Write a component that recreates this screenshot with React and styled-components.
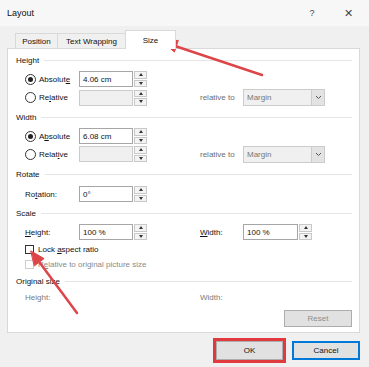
import React from 'react'
import styled, { createGlobalStyle } from 'styled-components'

const GlobalStyle = createGlobalStyle`
  * { box-sizing: border-box; }
  body {
    margin: 0;
    background: #f0f0f0;
    font-family: "Liberation Sans", Arial, sans-serif;
  }
`

const Dialog = styled.div`
  position: relative;
  width: 369px;
  height: 367px;
  background: #f0f0f0;
  display: flex;
  flex-direction: column;
  font-size: 8px;
  color: #111;
  overflow: hidden;
`
const TitleBar = styled.div`
  height: 26px;
  display: flex;
  align-items: center;
  padding: 0 3px 0 7px;
  background: #f7f7f7;
`
const Title = styled.div`
  flex: 1;
  font-size: 9px;
`
const TitleButton = styled.div`
  width: 36px;
  text-align: center;
  font-size: ${({ big }) => (big ? 11 : 9)}px;
  color: #444;
`
const TabRow = styled.div`
  height: 22px;
  display: flex;
  align-items: flex-end;
  padding-left: 15px;
  position: relative;
  z-index: 1;
`
const Tab = styled.div`
  width: ${({ w }) => w}px;
  height: ${({ active }) => (active ? 19 : 15)}px;
  margin-right: -1px;
  margin-bottom: ${({ active }) => (active ? -1 : 0)}px;
  background: ${({ active }) => (active ? '#fff' : '#f0f0f0')};
  border: 1px solid #d9d9d9;
  border-bottom: none;
  display: flex;
  align-items: center;
  justify-content: center;
  padding-top: ${({ active }) => (active ? 0 : 1)}px;
`
const Panel = styled.div`
  margin: 0 9px 0 7px;
  height: 285px;
  background: #fff;
  border: 1px solid #d9d9d9;
  padding: 1px 7px 0 8px;
  display: flex;
  flex-direction: column;
`
const GroupLabel = styled.div`
  height: ${({ h }) => h}px;
  display: flex;
  align-items: center;
  gap: 5px;

  &::after {
    content: '';
    flex: 1;
    height: 1px;
    background: #e5e5e5;
  }
`
const Row = styled.div`
  height: ${({ h }) => h}px;
  display: grid;
  grid-template-columns: 54px 121px 43px auto;
  align-items: center;
  padding-left: 9px;
  color: ${({ muted }) => (muted ? '#7a7a7a' : '#111')};
`
const CheckRow = styled.div`
  height: ${({ h }) => h}px;
  display: flex;
  align-items: center;
  gap: 4px;
  padding-left: 9px;
  color: ${({ disabled }) => (disabled ? '#8a8a8a' : '#111')};
`
const Option = styled.label`
  display: flex;
  align-items: center;
  gap: 3px;
`
const Radio = styled.span`
  width: 11px;
  height: 11px;
  border-radius: 50%;
  border: 1px solid #333;
  background: #fff;
  display: flex;
  align-items: center;
  justify-content: center;

  &::after {
    content: '';
    display: ${({ checked }) => (checked ? 'block' : 'none')};
    width: 5px;
    height: 5px;
    border-radius: 50%;
    background: #222;
  }
`
const Check = styled.span`
  width: 9px;
  height: 9px;
  border: 1px solid ${({ disabled }) => (disabled ? '#cfcfcf' : '#333')};
  background: #fff;
`
const Field = styled.div`
  display: flex;
  align-items: center;
  gap: 1px;
`
const Input = styled.div`
  width: ${({ w }) => w}px;
  height: 16px;
  border: 1px solid ${({ disabled }) => (disabled ? '#cccccc' : '#a6a6a6')};
  background: ${({ disabled }) => (disabled ? '#f0f0f0' : '#fff')};
  padding-left: 3px;
  display: flex;
  align-items: center;
`
const Spinner = styled.div`
  width: 13px;
  height: 16px;
  display: flex;
  flex-direction: column;
  gap: 1px;
`
const SpinHalf = styled.div`
  flex: 1;
  background: #f3f3f3;
  border: 1px solid #c8c8c8;
  display: flex;
  align-items: center;
  justify-content: center;

  &::after {
    content: '';
    border-left: 2.5px solid transparent;
    border-right: 2.5px solid transparent;
    ${({ down }) => (down ? 'border-top' : 'border-bottom')}: 3px solid #333;
  }
`
const Combo = styled.div`
  width: 82px;
  height: 17px;
  border: 1px solid #cccccc;
  background: #f0f0f0;
  color: #777;
  display: flex;
  align-items: center;
  padding-left: 3px;
`
const ComboText = styled.span`
  flex: 1;
`
const ComboArrow = styled.span`
  width: 13px;
  height: 100%;
  background: #e3e3e3;
  border-left: 1px solid #cccccc;
  display: flex;
  align-items: center;
  justify-content: center;
`
const Muted = styled.span`
  color: #6d6d6d;
`
const ResetRow = styled.div`
  display: flex;
  justify-content: flex-end;
  margin-top: 7px;
`
const Button = styled.div`
  width: ${({ w }) => w}px;
  height: ${({ h }) => h || 19}px;
  display: flex;
  align-items: center;
  justify-content: center;
  background: #e1e1e1;
  border: 1px solid ${({ focus }) => (focus ? '#0078d7' : '#adadad')};
  color: ${({ disabled }) => (disabled ? '#8d8d8d' : '#111')};
  outline: ${({ marked }) => (marked ? '3px solid #e0393e' : 'none')};
  box-shadow: ${({ focus }) => (focus ? 'inset 0 0 0 1px #0078d7' : 'none')};
`
const Footer = styled.div`
  margin-top: 8px;
  display: flex;
  justify-content: flex-end;
  gap: 9px;
  padding-right: 9px;
`
const Overlay = styled.svg`
  position: absolute;
  left: 0;
  top: 0;
  pointer-events: none;
`

const Spin = () => (
  <Spinner>
    <SpinHalf />
    <SpinHalf down />
  </Spinner>
)

const NumberField = ({ value, w = 54, disabled }) => (
  <Field>
    <Input w={w} disabled={disabled}>{value}</Input>
    <Spin />
  </Field>
)

const MarginCombo = () => (
  <Combo>
    <ComboText>Margin</ComboText>
    <ComboArrow>
      <svg width="7" height="5" viewBox="0 0 7 5">
        <polyline points="1,1 3.5,3.5 6,1" fill="none" stroke="#555" strokeWidth="1" />
      </svg>
    </ComboArrow>
  </Combo>
)

const Arrows = () => (
  <Overlay width="369" height="367" viewBox="0 0 369 367">
    <g fill="#dd4549" stroke="#dd4549" strokeLinecap="round">
      <line x1="262" y1="75" x2="175" y2="46" strokeWidth="2.5" />
      <polygon points="163,42 174.4,52.1 178.2,40.7" strokeWidth="1" strokeLinejoin="round" />
      <line x1="77" y1="313" x2="40" y2="263" strokeWidth="2.5" />
      <polygon points="31,251 44.1,258.6 34.5,265.8" strokeWidth="1" strokeLinejoin="round" />
    </g>
  </Overlay>
)

const App = () => {
  return (
    <>
      <GlobalStyle />
      <Dialog>
        <TitleBar>
          <Title>Layout</Title>
          <TitleButton>?</TitleButton>
          <TitleButton big>✕</TitleButton>
        </TitleBar>
        <TabRow>
          <Tab w={43}>Position</Tab>
          <Tab w={69}>Text Wrapping</Tab>
          <Tab w={51} active>Size</Tab>
        </TabRow>
        <Panel>
          <GroupLabel h={20}>Height</GroupLabel>
          <Row h={18}>
            <Option><Radio checked /><span>Absolut<u>e</u></span></Option>
            <NumberField value="4.06 cm" />
          </Row>
          <Row h={19}>
            <Option><Radio /><span>Re<u>l</u>ative</span></Option>
            <NumberField disabled />
            <Muted>relative to</Muted>
            <MarginCombo />
          </Row>

          <GroupLabel h={20}>Width</GroupLabel>
          <Row h={18}>
            <Option><Radio checked /><span>A<u>b</u>solute</span></Option>
            <NumberField value="6.08 cm" />
          </Row>
          <Row h={18}>
            <Option><Radio /><span>Relat<u>i</u>ve</span></Option>
            <NumberField disabled />
            <Muted>relative to</Muted>
            <MarginCombo />
          </Row>

          <GroupLabel h={22}>Rotate</GroupLabel>
          <Row h={18}>
            <span>Ro<u>t</u>ation:</span>
            <NumberField value="0°" />
          </Row>

          <GroupLabel h={20}>Scale</GroupLabel>
          <Row h={18}>
            <span><u>H</u>eight:</span>
            <NumberField value="100 %" />
            <span><u>W</u>idth:</span>
            <NumberField value="100 %" w={55} />
          </Row>
          <CheckRow h={16}>
            <Check />
            <span>Lock <u>a</u>spect ratio</span>
          </CheckRow>
          <CheckRow h={14} disabled>
            <Check disabled />
            <span>R<u>e</u>lative to original picture size</span>
          </CheckRow>

          <GroupLabel h={20}>Original size</GroupLabel>
          <Row h={12} muted>
            <span>Height:</span>
            <span />
            <span>Width:</span>
          </Row>
          <ResetRow>
            <Button w={68} h={17} disabled>Reset</Button>
          </ResetRow>
        </Panel>
        <Footer>
          <Button w={67} marked>OK</Button>
          <Button w={68} focus>Cancel</Button>
        </Footer>
        <Arrows />
      </Dialog>
    </>
  )
}

export default App
